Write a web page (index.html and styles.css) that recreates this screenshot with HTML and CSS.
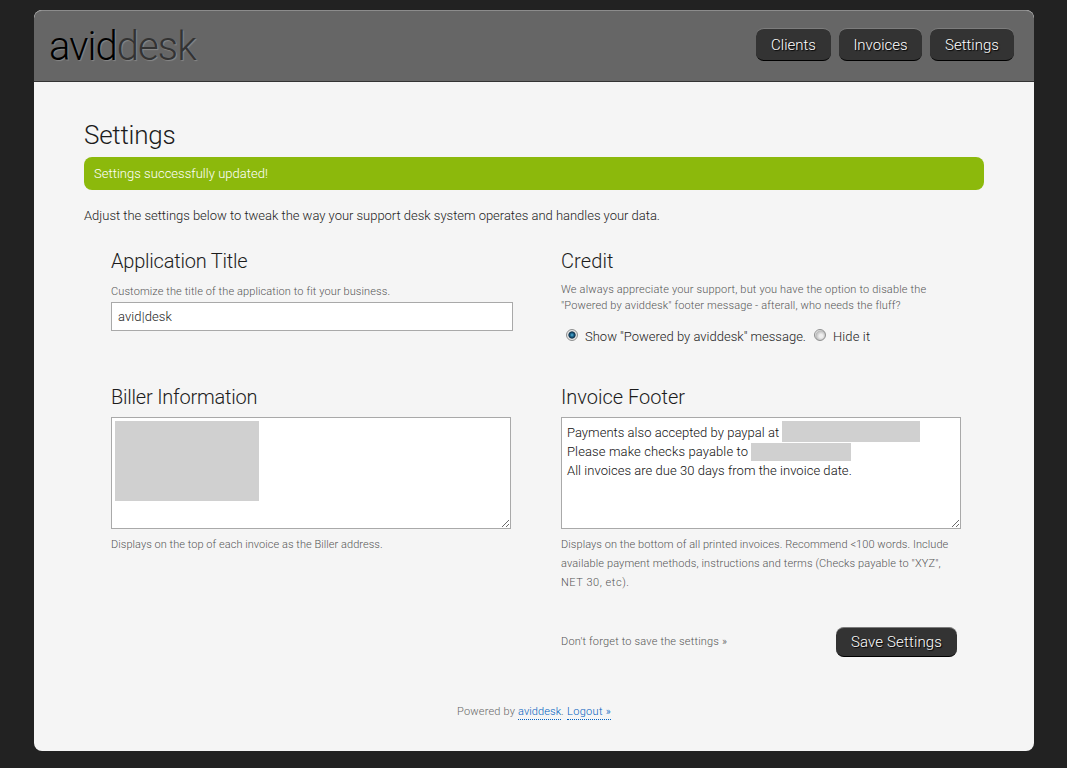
FILE: index.html
```html
<!DOCTYPE html>
<html lang="en">
<head>
<meta charset="utf-8">
<title>aviddesk - Settings</title>
<link rel="stylesheet" href="styles.css">
</head>
<body>
<div class="page">
  <header class="header">
    <div class="logo"><span class="logo-dark">avid</span><span class="logo-soft">desk</span></div>
    <nav class="nav">
      <a class="button nav-clients">Clients</a>
      <a class="button nav-invoices">Invoices</a>
      <a class="button nav-settings">Settings</a>
    </nav>
  </header>
  <main class="content">
    <h1>Settings</h1>
    <div class="alert">Settings successfully updated!</div>
    <p class="intro">Adjust the settings below to tweak the way your support desk system operates and handles your data.</p>
    <div class="grid">
      <section class="cell">
        <h2 class="snug">Application Title</h2>
        <p class="hint hint-title">Customize the title of the application to fit your business.</p>
        <div class="input">avid|desk</div>
      </section>
      <section class="cell">
        <h2 class="loose">Credit</h2>
        <p class="hint hint-credit">We always appreciate your support, but you have the option to disable the<br><span class="hint-second">"Powered by aviddesk" footer message - afterall, who needs the fluff?</span></p>
        <div class="radios">
          <span class="radio radio-on"></span><span class="radio-label show">Show "Powered by aviddesk" message.</span>
          <span class="radio"></span><span class="radio-label hide">Hide it</span>
        </div>
      </section>
      <section class="cell">
        <h2 class="snug">Biller Information</h2>
        <div class="area">
          <div class="mask mask-biller"></div>
          <svg class="grip" width="9" height="9" viewBox="0 0 9 9"><path d="M1 8 8 1M5 8 8 5"/></svg>
        </div>
        <p class="help help-biller">Displays on the top of each invoice as the Biller address.</p>
      </section>
      <section class="cell">
        <h2>Invoice Footer</h2>
        <div class="area area-text">
          <div class="line"><span class="line-pay">Payments also accepted by paypal at</span><span class="mask mask-paypal"></span></div>
          <div class="line"><span class="line-checks">Please make checks payable to</span><span class="mask mask-payee"></span></div>
          <div class="line line-due">All invoices are due 30 days from the invoice date.</div>
          <svg class="grip" width="9" height="9" viewBox="0 0 9 9"><path d="M1 8 8 1M5 8 8 5"/></svg>
        </div>
        <p class="help"><span class="help-a">Displays on the bottom of all printed invoices. Recommend &lt;100 words. Include</span><br><span class="help-b">available payment methods, instructions and terms (Checks payable to "XYZ",</span><br><span class="help-c">NET 30, etc).</span></p>
      </section>
    </div>
    <div class="actions">
      <span class="reminder">Don't forget to save the settings »</span>
      <a class="button save">Save Settings</a>
    </div>
  </main>
  <footer class="footer">
    <span class="powered">Powered by</span>
    <a class="link">aviddesk</a><span class="dot">.</span>
    <a class="link logout">Logout »</a>
  </footer>
</div>
</body>
</html>
```
FILE: styles.css
```css
* { box-sizing: border-box; }

body {
  margin: 0;
  padding: 10px 33px 17px 34px;
  background: #222;
  color: #1c1c1c;
  font: 300 13px/19px Roboto, "Open Sans", sans-serif;
  white-space: nowrap;
}

h1, h2, p { margin: 0; font-weight: 300; }

.page {
  width: 1000px;
  height: 741px;
  background: #f5f5f5;
  border-radius: 8px;
  overflow: hidden;
}

.header {
  display: flex;
  justify-content: space-between;
  align-items: flex-start;
  height: 72px;
  padding: 17px 20px 0 15px;
  background: #666;
  border-top: 1px solid #8c8c8c;
  border-bottom: 1px solid #333;
  border-radius: 8px 8px 0 0;
}

.logo {
  padding-top: 1px;
  font-size: 40px;
  line-height: 36px;
  letter-spacing: -0.95px;
  text-shadow: 1px 1px 1px #888;
}
.logo-dark { color: #000; }
.logo-soft { color: #333; }

.nav { display: flex; gap: 8px; }

.button {
  height: 33px;
  background: #333;
  border-top: 1px solid #7c7c7c;
  border-bottom: 1px solid #000;
  border-radius: 8px;
  color: #fff;
  font-size: 15px;
  line-height: 32px;
  text-align: center;
  text-shadow: 1px 1px 1px #000;
}
.nav-clients { width: 75px; }
.nav-invoices { width: 83px; }
.nav-settings { width: 84px; }

.content { padding: 38px 50px 0; }

h1 { font-size: 26px; line-height: 30px; letter-spacing: -0.25px; }

.alert {
  height: 33px;
  margin-top: 7px;
  padding-left: 10px;
  background: #8cb90c;
  border-radius: 8px;
  color: #fff;
  letter-spacing: 0.03px;
  line-height: 33px;
}

.intro { margin-top: 16px; letter-spacing: -0.02px; }

.grid {
  display: grid;
  grid-template-columns: 450px 400px;
  grid-template-rows: 136px 207px;
  padding: 24px 0 0 27px;
}

h2 { font-size: 20px; line-height: 24px; }
.snug { letter-spacing: -0.22px; }
.loose { letter-spacing: 0.1px; }

.hint { color: #555; font-size: 11px; line-height: 16px; }
.hint-title { margin-top: 11px; letter-spacing: 0.11px; }
.hint-credit { margin-top: 9px; letter-spacing: 0.17px; }
.hint-second { letter-spacing: 0.14px; }

.input {
  width: 402px;
  height: 29px;
  margin-top: 2px;
  padding-left: 6px;
  background: #fff;
  border: 1px solid #a9a9a9;
  letter-spacing: 0.1px;
  line-height: 28px;
}

.radios { display: flex; height: 19px; margin: 13px 0 0 5px; }
.radio {
  width: 12px;
  height: 12px;
  margin: 2px 7px 0 0;
  border: 1px solid #8e8f8f;
  border-radius: 50%;
  background: radial-gradient(circle at 60% 60%, #eee 20%, #bbb 60%, #f5f5f5 75%);
}
.radio-on { background: radial-gradient(circle at 50% 50%, #58b7dc 0, #206a92 1.6px, #0b2f4a 3.2px, #e4e4e4 4px); }
.show { width: 229px; }
.hide { letter-spacing: 0.12px; }

.area {
  position: relative;
  width: 400px;
  height: 112px;
  margin-top: 8px;
  padding: 3px;
  background: #fff;
  border: 1px solid #a9a9a9;
}
.area-text { padding: 5px; }
.grip { position: absolute; right: 0; bottom: 0; fill: none; stroke: #444; stroke-width: 0.8; }

.mask { background: #d0d0d0; }
.mask-biller { width: 144px; height: 80px; }

.line { display: flex; height: 19px; color: #111; }
.line-pay { width: 215px; letter-spacing: 0.03px; }
.line-checks { width: 184px; letter-spacing: 0.12px; }
.line-due { letter-spacing: 0.04px; }
.mask-paypal { width: 138px; height: 21px; margin-top: -2px; }
.mask-payee { width: 100px; height: 18px; margin-top: 1px; }

.help { margin-top: 6px; color: #555; font-size: 11px; line-height: 19px; }
.help-biller { letter-spacing: 0.05px; }
.help-a { letter-spacing: 0.07px; }
.help-b { letter-spacing: 0.12px; }
.help-c { letter-spacing: 0.55px; }

.actions {
  display: flex;
  justify-content: space-between;
  margin-top: 35px;
  padding: 0 27px 0 477px;
}
.reminder { padding-top: 5px; color: #555; font-size: 11px; letter-spacing: 0.18px; }
.save { width: 121px; height: 30px; line-height: 28px; letter-spacing: 0.15px; }

.footer {
  display: flex;
  margin: 45px 0 0 423px;
  color: #666;
  font-size: 11px;
  line-height: 19px;
}
.powered { width: 61px; letter-spacing: 0.2px; }
.link { height: 18px; border-bottom: 1px dotted #0060c0; color: #0060c0; letter-spacing: 0.08px; }
.dot { width: 6px; }
.logout { letter-spacing: 0.3px; }
```
